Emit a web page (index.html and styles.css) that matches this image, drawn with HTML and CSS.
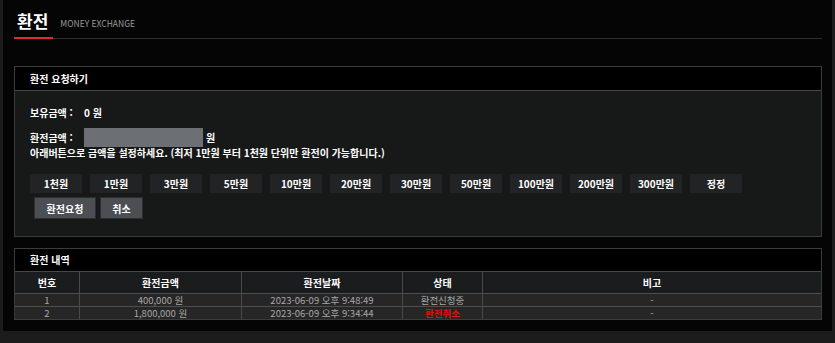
FILE: index.html
```html
<!DOCTYPE html>
<html lang="ko">
<head>
  <meta charset="UTF-8" />
  <title>환전</title>
  <link rel="stylesheet" href="styles.css">
</head>
<body>
  <div class="wrap">
    <div class="page-title">
      <h2>환전</h2>
      <span>MONEY EXCHANGE</span>
    </div>

    <div class="panel">
      <div class="panel-head">환전 요청하기</div>
      <div class="panel-body">
        <div class="row first">
          <label>보유금액 :</label>
          <span>0 원</span>
        </div>
        <div class="row">
          <label>환전금액 :</label>
          <input type="text" class="amount">
          <span class="won">원</span>
        </div>
        <div class="notice">아래버튼으로 금액을 설정하세요. (최저 1만원 부터 1천원 단위만 환전이 가능합니다.)</div>
        <div class="amount-buttons">
          <button>1천원</button>
          <button>1만원</button>
          <button>3만원</button>
          <button>5만원</button>
          <button>10만원</button>
          <button>20만원</button>
          <button>30만원</button>
          <button>50만원</button>
          <button>100만원</button>
          <button>200만원</button>
          <button>300만원</button>
          <button>정정</button>
        </div>
        <div class="actions">
          <button>환전요청</button>
          <button>취소</button>
        </div>
      </div>
    </div>

    <div class="panel history">
      <div class="panel-head">환전 내역</div>
      <table>
        <thead>
          <tr>
            <th class="c-no">번호</th>
            <th class="c-amount">환전금액</th>
            <th class="c-date">환전날짜</th>
            <th class="c-state">상태</th>
            <th>비고</th>
          </tr>
        </thead>
        <tbody>
          <tr>
            <td>1</td>
            <td>400,000 원</td>
            <td>2023-06-09 오후 9:48:49</td>
            <td>환전신청중</td>
            <td>-</td>
          </tr>
          <tr>
            <td>2</td>
            <td>1,800,000 원</td>
            <td>2023-06-09 오후 9:34:44</td>
            <td class="cancel">환전취소</td>
            <td>-</td>
          </tr>
        </tbody>
      </table>
    </div>
  </div>
</body>
</html>
```

FILE: styles.css
```css
body {
  margin: 0;
  background-color: #1c1c1c;
  font-family: "Noto Sans CJK KR", "Noto Sans", sans-serif;
  font-size: 10px;
  color: #fff;
}

.wrap {
  margin: 0 3px;
  height: 331px;
  padding: 0 10px 0 11px;
  background-color: #050505;
  overflow: hidden;
}

.page-title {
  display: flex;
  align-items: flex-end;
  border-bottom: 1px solid #2e2e2e;
  padding-top: 8px;
}

.page-title h2 {
  margin: 0 0 -1px;
  padding: 0 5px 4px 3px;
  font-size: 17px;
  line-height: 25px;
  font-weight: 700;
  border-bottom: 2px solid #e0283c;
}

.page-title span {
  margin-left: 7px;
  padding-bottom: 9px;
  font-size: 8.5px;
  line-height: 12px;
  color: #9a9a9a;
}

.panel {
  margin-top: 27px;
  border: 1px solid #3c3c3c;
  background-color: #171818;
}

.panel-head {
  height: 23px;
  line-height: 23px;
  padding-left: 15px;
  background-color: #000;
  border-bottom: 1px solid #474747;
  font-weight: 700;
}

.panel-body {
  padding: 13px 15px 17px;
}

.row {
  display: flex;
  align-items: center;
  height: 19px;
  margin-top: 8px;
  font-weight: 700;
}

.row.first {
  margin-top: 0;
  height: 16px;
}

.row label {
  width: 54px;
}

.amount {
  width: 119px;
  height: 19px;
  box-sizing: border-box;
  border: none;
  background-color: #6c6f73;
  padding: 0;
}

.won {
  margin-left: 3px;
}

.notice {
  line-height: 12px;
  font-weight: 700;
}

.amount-buttons {
  display: flex;
  gap: 8px;
  margin-top: 15px;
}

.amount-buttons button,
.actions button {
  font-family: inherit;
  font-size: 10px;
  font-weight: 700;
  color: #fff;
  border: none;
  padding: 0;
  cursor: pointer;
}

.amount-buttons button {
  width: 52px;
  height: 19px;
  background-color: #222324;
}

.actions {
  display: flex;
  gap: 4px;
  margin: 4px 0 0 4px;
}

.actions button {
  height: 22px;
  padding: 0 10px;
  background-color: #4b4f53;
  border: 1px solid #2c2f31;
}

.actions button:first-child {
  width: 62px;
}

.actions button:last-child {
  width: 43px;
}

.history {
  margin-top: 11px;
}

.history .panel-head {
  height: 22px;
  line-height: 22px;
}

table {
  width: 100%;
  border-collapse: collapse;
  text-align: center;
}

th {
  height: 21px;
  padding: 0;
  background-color: #1b1c1d;
  border-left: 1px solid #4a4a4a;
  font-weight: 700;
}

td {
  height: 12px;
  padding: 0;
  font-size: 9.5px;
  line-height: 12px;
  background-color: #262626;
  border-top: 1px solid #4e4e4e;
  border-left: 1px solid #4a4a4a;
  color: #a8a8a8;
}

td > span {
  display: block;
}

th:first-child,
td:first-child {
  border-left: none;
}

.c-no { width: 64px; }
.c-amount { width: 161px; }
.c-date { width: 160px; }
.c-state { width: 79px; }

td.cancel {
  color: #e01010;
  font-weight: 700;
}
```
